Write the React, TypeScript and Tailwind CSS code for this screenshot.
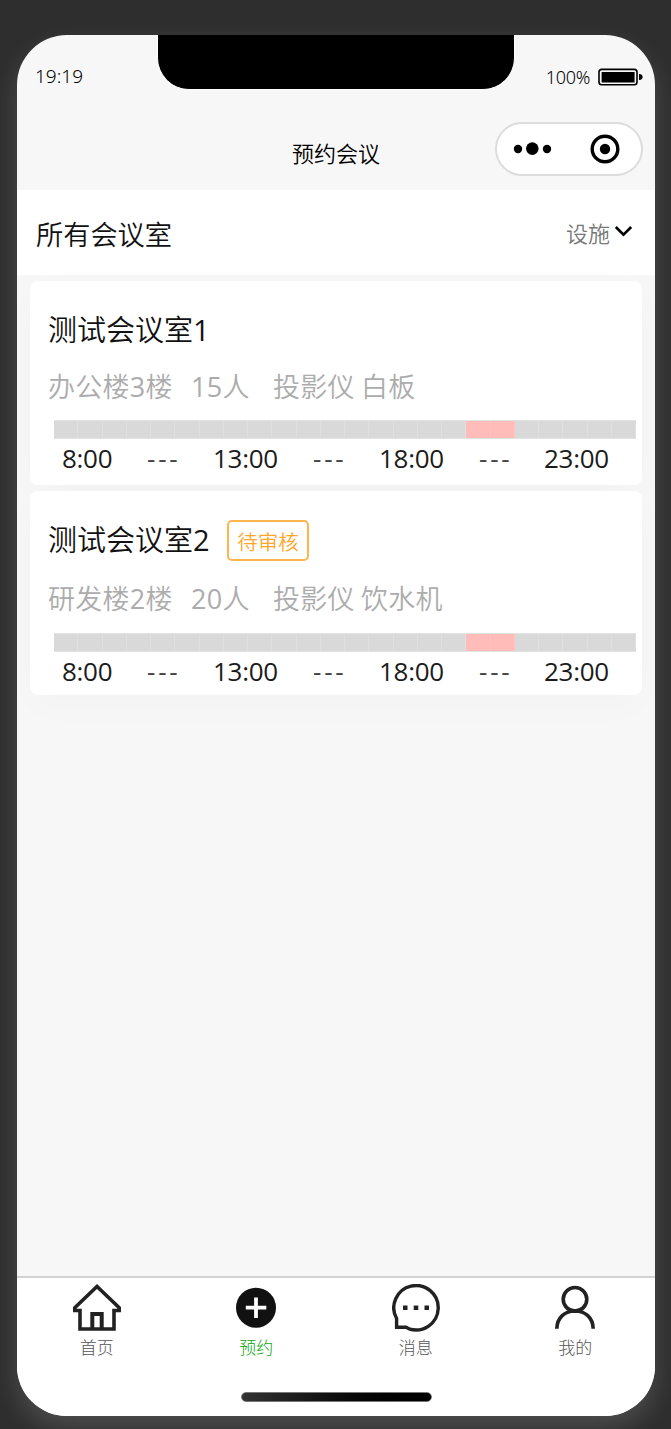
import React from "react";

const rooms = [
  {
    id: 1,
    name: "测试会议室",
    no: "1",
    place: ["办公楼", "3", "楼"],
    people: "15",
    tools: ["投影仪", "白板"],
    status: "",
    busy: [17, 18],
  },
  {
    id: 2,
    name: "测试会议室",
    no: "2",
    place: ["研发楼", "2", "楼"],
    people: "20",
    tools: ["投影仪", "饮水机"],
    status: "待审核",
    busy: [17, 18],
  },
];

const slots = Array.from({ length: 24 }, (_, i) => i);

function StatusBar() {
  return (
    <div className="flex h-[87px] items-start justify-between pl-[18px] pr-3">
      <span className="mt-[31px] text-[19px] leading-5 font-light text-black">
        19:19
      </span>
      <div className="mt-8 flex items-center">
        <span className="text-[18px] leading-5 font-light tracking-[-0.3px] text-black">100%</span>
        <svg className="ml-2" width="45" height="18" viewBox="0 0 45 18">
          <rect x="1" y="1.4" width="38" height="15.4" rx="2.8" fill="none" stroke="#000" strokeWidth="1.6" />
          <rect x="3.6" y="4" width="33" height="10.4" rx="0.5" fill="#000" />
          <path d="M41 6 Q44.6 6 44.6 9 Q44.6 12 41 12 Z" fill="#000" />
        </svg>
      </div>
    </div>
  );
}

function NavBar() {
  return (
    <div className="grid h-[54px] grid-cols-[1fr_auto_1fr]">
      <div></div>
      <h1 className="mt-[18px] text-[22px] leading-[27px] font-[350] text-black">预约会议</h1>
      <div className="mr-3 flex h-[54px] w-[148px] items-center justify-between justify-self-end rounded-full border-2 border-[#dcdcdc] bg-white pl-4 pr-[21px]">
        <svg width="40" height="14" viewBox="0 0 40 14">
          <circle cx="5" cy="7" r="4.2" />
          <circle cx="19.3" cy="6.6" r="6.3" />
          <circle cx="34" cy="7" r="4.2" />
        </svg>
        <svg width="30" height="30" viewBox="0 0 30 30">
          <circle cx="15" cy="15" r="12.8" fill="none" stroke="#000" strokeWidth="3.4" />
          <circle cx="15" cy="15" r="5.2" />
        </svg>
      </div>
    </div>
  );
}

function Num({ children }: { children: React.ReactNode }) {
  return <span className="font-normal">{children}</span>;
}

function RoomCard({ room }: { room: (typeof rooms)[number] }) {
  return (
    <div className="h-[204px] rounded-lg bg-white pl-[18px] pr-[6px] font-['Open_Sans','Noto_Sans_CJK_SC',sans-serif] shadow-[0_10px_40px_rgba(0,0,0,0.018)]">
      {/* name and status */}
      <div className="flex h-[84px] items-start pt-[29px]">
        <h3 className="w-[162px] text-[29px] leading-10 font-[350] whitespace-nowrap text-[#111]">
          {room.name}
          <Num>{room.no}</Num>
        </h3>
        {room.status && (
          <span className="ml-[17px] flex h-[41px] w-[82px] items-center justify-center rounded-[5px] border-2 border-[#ffb54d] pt-[3px] text-[20.5px] font-[350] text-[#ffa62b]">
            {room.status}
          </span>
        )}
      </div>
      <div
        className={
          room.status
            ? "flex h-[58px] text-[27px] leading-[48px] font-[350] tracking-[0.25px] text-[#acacac]"
            : "flex h-[55px] text-[27px] leading-[44px] font-[350] tracking-[0.25px] text-[#acacac]"
        }
      >
        <span className="w-[143px]">
          {room.place[0]}
          <Num>{room.place[1]}</Num>
          {room.place[2]}
        </span>
        <span className="w-[82px]">
          <Num>{room.people}</Num>人
        </span>
        <span className="w-[88px]">{room.tools[0]}</span>
        <span>{room.tools[1]}</span>
      </div>
      {/* timeline */}
      <div className="ml-[6px] flex h-[19px] border-y border-[#e3e3e3]">
        {slots.map((i) => (
          <div
            key={i}
            className={
              room.busy.includes(i)
                ? "flex-1 border-r border-[#ffc6c2] bg-[#ffbcb8]"
                : "flex-1 border-r border-[#dfdfdf] bg-[#d9d9d9]"
            }
          ></div>
        ))}
      </div>
      <div className="ml-[14px] flex text-[26px] leading-[38px] tracking-[-0.3px] text-[#1b1b1b]">
        <span className="w-[85px]">8:00</span>
        <Dash />
        <span className="w-[100px]">13:00</span>
        <Dash />
        <span className="w-[100px]">18:00</span>
        <Dash />
        <span className="-ml-px">23:00</span>
      </div>
    </div>
  );
}

function Dash() {
  return <span className="w-[66px] tracking-[2.8px] text-[#444]">---</span>;
}

function TabBar() {
  const tabs = [
    {
      title: "首页",
      icon: (
        <svg width="48" height="48" viewBox="0 0 48 48" fill="none" stroke="#222" strokeWidth="3.6">
          <path d="M7 26.5 H1.8 V23.8 L24 2.5 L46.2 23.8 V26.5 H41 V45 H7 Z" />
          <path d="M19.3 45 V30 H28.7 V45" strokeWidth="4" />
        </svg>
      ),
    },
    {
      title: "预约",
      active: true,
      icon: (
        <svg width="48" height="48" viewBox="0 0 48 48">
          <circle cx="24" cy="23.7" r="20" fill="#111" />
          <path d="M24 13.5 V34 M13.8 23.7 H34.3" stroke="#fff" strokeWidth="3.8" />
        </svg>
      ),
    },
    {
      title: "消息",
      icon: (
        <svg width="48" height="48" viewBox="0 0 48 48" fill="none" stroke="#222" strokeWidth="3.4">
          <path d="M4.6 34.5 A22.2 22.2 0 1 1 17 44.8 L14 43.2 H4.6 Z" />
          <path d="M11 23.8 H15.5 M21.7 23.8 H26.3 M32.5 23.8 H37" strokeWidth="4.6" />
        </svg>
      ),
    },
    {
      title: "我的",
      icon: (
        <svg width="48" height="48" viewBox="0 0 48 48" fill="none" stroke="#222" strokeWidth="3.6">
          <circle cx="24" cy="15.3" r="11.8" />
          <path d="M5.8 44.8 C6 33.5 14 27 24 27 S42 33.5 42.2 44.8" />
        </svg>
      ),
    },
  ];
  return (
    <div className="h-[140px] border-t-2 border-[#d2d2d2] bg-white">
      <div className="grid grid-cols-4 pt-1.5">
        {tabs.map((tab) => (
          <div key={tab.title} className="flex flex-col items-center">
            {tab.icon}
            <span
              className={
                tab.active
                  ? "mt-1 text-[17px] leading-6 font-light text-[#0aa50a]"
                  : "mt-1 text-[17px] leading-6 font-light text-[#555]"
              }
            >
              {tab.title}
            </span>
          </div>
        ))}
      </div>
      <div className="mx-auto mt-8 h-[10px] w-[191px] rounded-full border border-[#777] bg-linear-to-r from-[#333] to-black"></div>
    </div>
  );
}

export default function App() {
  return (
    <div className="h-[1429px] w-[671px] overflow-hidden bg-[#2e2e2e] pt-[35px] pl-[17px] font-['Noto_Sans','Noto_Sans_CJK_SC',sans-serif]">
      <div className="relative flex h-[1381px] w-[638px] flex-col overflow-hidden rounded-[50px] bg-[#f7f7f7] shadow-[0_12px_26px_rgba(255,255,255,0.15)]">
        {/* notch */}
        <div className="absolute top-0 left-[140px] h-[55px] w-[358px] rounded-b-[32px] border border-t-0 border-white bg-black"></div>
        <div className="h-[155px]">
          <StatusBar />
          <NavBar />
        </div>
        {/* filter row */}
        <div className="flex h-[85px] justify-between bg-white pl-[19px] pr-[22px]">
          <h2 className="mt-[25px] text-[27.2px] leading-10 font-[350] text-[#111]">所有会议室</h2>
          <div className="mt-[25px] flex h-10 text-[22px] leading-[37px] font-[350] text-[#777]">
            设施
            <svg className="mt-[10px] ml-[4px]" width="19" height="13" viewBox="0 0 19 13">
              <path d="M1.8 2 L9.5 9.7 L17.2 2" fill="none" stroke="#000" strokeWidth="2.6" />
            </svg>
          </div>
        </div>
        <div className="flex flex-1 flex-col gap-1.5 pt-1.5 pr-[13px] pl-[13px]">
          {rooms.map((room) => (
            <RoomCard key={room.id} room={room} />
          ))}
        </div>
        <TabBar />
      </div>
    </div>
  );
}
